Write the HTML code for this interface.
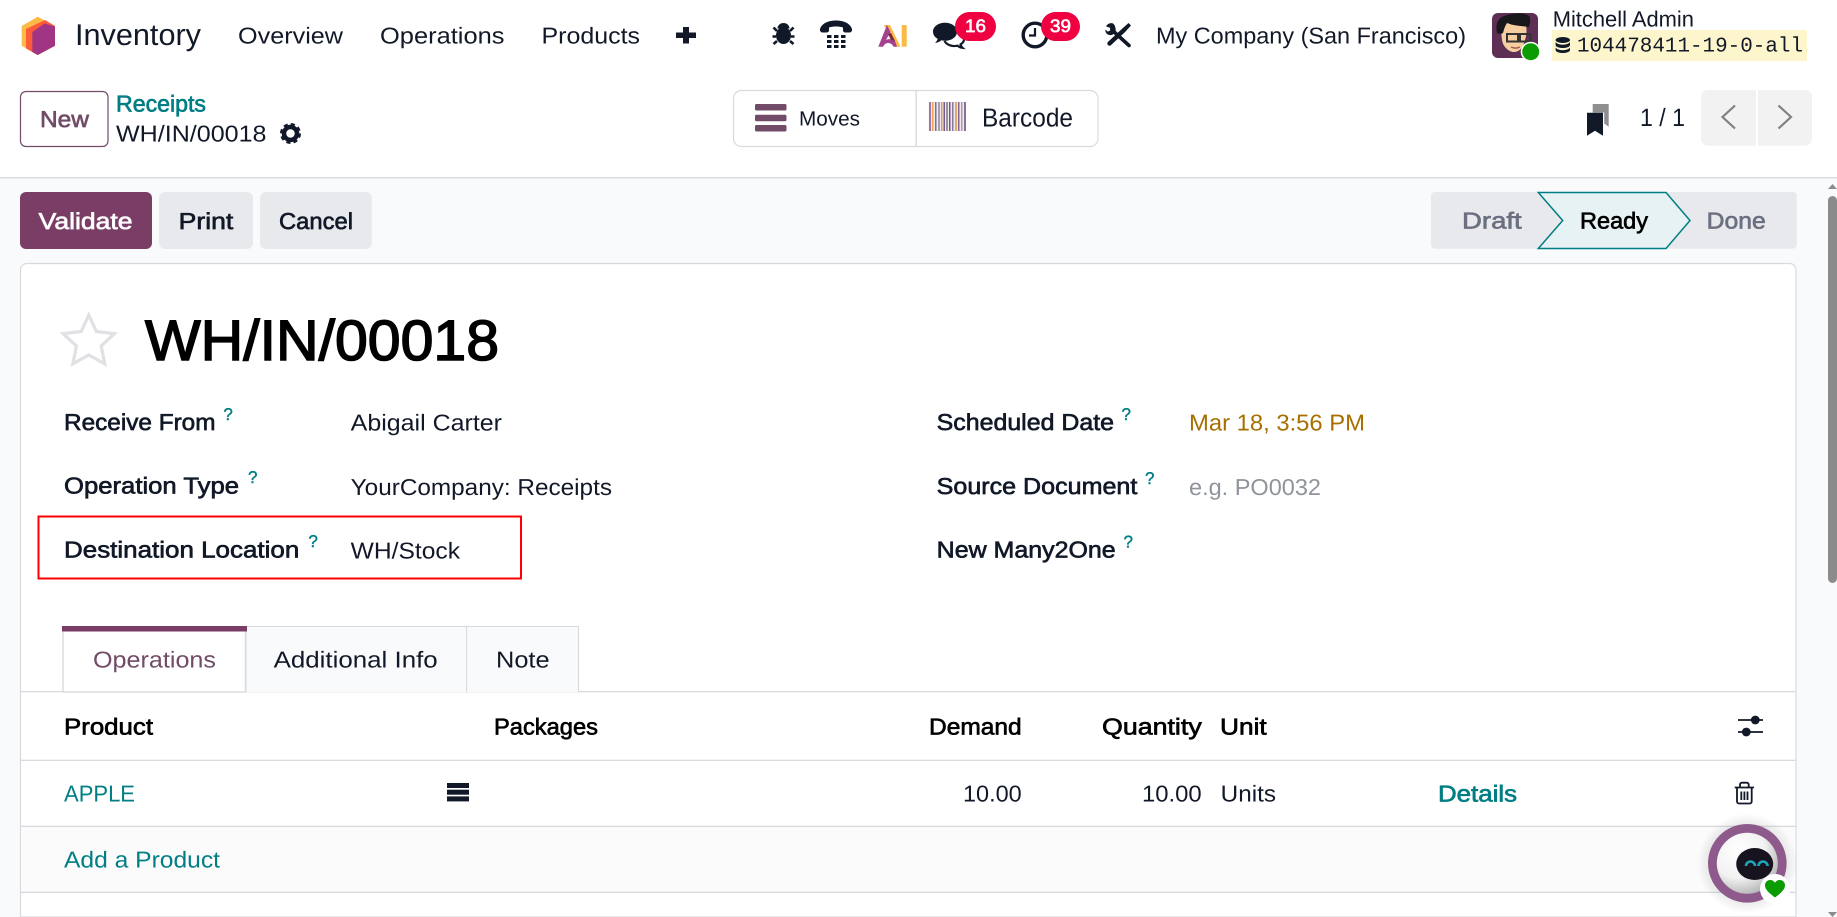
<!DOCTYPE html>
<html lang="en"><head><meta charset="utf-8"><title>WH/IN/00018</title>
<style>
html,body{margin:0;padding:0;width:1837px;height:917px;overflow:hidden;background:#f9fafb}
svg{display:block}
text{font-family:"Liberation Sans",sans-serif;font-size:23px;color:#111827;fill:currentColor;stroke:currentColor;stroke-width:0;text-rendering:geometricPrecision}
.b{stroke-width:.65px}
.t{color:#017e84}
.k{color:#000}
.q{font-size:17px;stroke-width:.4px;color:#017e84}
</style></head><body>
<svg width="1837" height="917" viewBox="0 0 1837 917" xmlns="http://www.w3.org/2000/svg">
<defs>
<radialGradient id="bh" cx="35%" cy="30%" r="80%"><stop offset="0" stop-color="#fff"/><stop offset=".55" stop-color="#f2f2f2"/><stop offset="1" stop-color="#aaa"/></radialGradient>
<radialGradient id="sh" cx="50%" cy="50%" r="50%"><stop offset=".72" stop-color="#000" stop-opacity=".1"/><stop offset="1" stop-color="#000" stop-opacity="0"/></radialGradient>
</defs>
<!-- backgrounds -->
<rect width="1837" height="917" fill="#f9fafb"/>
<rect width="1837" height="177" fill="#fff"/>
<rect y="177" width="1837" height="1.4" fill="#d8dadd"/>

<!-- logo -->
<polygon points="37.7,16.7 55,26 55,45.7 37.7,55 21.7,45.7 21.700,26" fill="#fbb945"/>
<polygon points="45,20 55,26 55,45.7 37.7,55 26,48.5 26,29" fill="#fc5c3a"/>
<polygon points="44.5,23.5 55,26.5 55,45.7 37.7,55 32.3,52 32.3,32" fill="#a23484"/>
<text x="75" y="45" style="font-size:30px" textLength="126" lengthAdjust="spacingAndGlyphs">Inventory</text>
<text x="238" y="43.5" textLength="105" lengthAdjust="spacingAndGlyphs">Overview</text>
<text x="380" y="43.5" textLength="124.5" lengthAdjust="spacingAndGlyphs">Operations</text>
<text x="541.5" y="43.5" textLength="98.5" lengthAdjust="spacingAndGlyphs">Products</text>
<path d="M683 27h6v5.500h7v5.500h-7V43.500h-6V38h-7v-5.500h7z" fill="#111827"/>

<!-- bug -->
<g fill="#111827" stroke="#111827">
<ellipse cx="783.5" cy="35.500" rx="7.500" ry="8.500" stroke="none"/>
<path d="M777.5 28.500a6 5.500 0 0 1 12 0z" stroke="none"/>
<path d="M777 31l-3.500-3.500M790 31l3.500-3.500M776 36.500h-3.500M791 36.500h3.500M777 41l-3.500 3M790 41l3.500 3" stroke-width="2.600" fill="none"/>
</g>
<!-- phone -->
<path d="M820 29c2-6 9-8.500 16-8.500s14 2.500 16 8.500c.3 2-.8 3.500-2.500 3.500h-4c-1.700 0-2.500-1-2.500-2.500v-2.500c-4.500-1.300-9.500-1.300-14 0V30c0 1.500-.8 2.500-2.500 2.500h-4C820.800 32.500 819.700 31 820 29z" fill="#111827"/>
<g fill="#111827">
<rect x="827" y="35" width="4.500" height="3"/><rect x="834" y="35" width="4.500" height="3"/><rect x="841" y="35" width="4.500" height="3"/>
<rect x="827" y="40" width="4.500" height="3"/><rect x="834" y="40" width="4.500" height="3"/><rect x="841" y="40" width="4.500" height="3"/>
<rect x="827" y="45" width="4.500" height="3"/><rect x="834" y="45" width="4.500" height="3"/><rect x="841" y="45" width="4.500" height="3"/>
</g>
<!-- AI -->
<path d="M884 25h6l10.500 21.700h-5.500z" fill="#fbb945"/>
<path d="M878.300 46.700L887 25l3.500 7-4.500 8c3-1.500 6.500-1 9 1l2 5.700h-3.500c-1.500-4-7-5-9.500-1.500l-1 1.500z" fill="#a6418f"/>
<path d="M888 34l3-1 4 8-4-1z" fill="#7a2a3a"/>
<rect x="901.700" y="25" width="5" height="21.700" rx="1" fill="#fbb945"/>
<!-- chat -->
<path d="M945 22.700c-6.800 0-12 3.900-12 9 0 3 1.900 5.500 4.700 7.100-.4 1.700-1.400 3-2.600 4.200 2.500-.3 4.700-1.300 6.300-2.700 1.200.3 2.400.4 3.600.4 6.800 0 12-3.900 12-9s-5.200-9-12-9z" fill="#111827"/>
<path d="M958.500 33c3.600 1.300 5.500 3.500 5.500 6.300 0 2.300-1.500 4-3.500 5.200.3 1.300 1 2.400 2 3.300-2-.2-3.800-1-5-2.100-5.500 1.200-11-1-13-4.700" fill="none" stroke="#111827" stroke-width="2.200"/>
<rect x="955" y="12" width="41" height="29" rx="14.500" fill="#ef0041"/>
<text x="965" y="32" class="b" style="font-size:18px;color:#fff" textLength="21" lengthAdjust="spacingAndGlyphs">16</text>
<!-- clock -->
<circle cx="1035" cy="35" r="11.800" fill="none" stroke="#111827" stroke-width="3.400"/>
<path d="M1035 28v7.500h-6" fill="none" stroke="#111827" stroke-width="2.200"/>
<rect x="1041" y="12" width="39" height="29" rx="14.500" fill="#ef0041"/>
<text x="1050" y="32" class="b" style="font-size:18px;color:#fff" textLength="21" lengthAdjust="spacingAndGlyphs">39</text>
<!-- tools -->
<path d="M1112 30l17 15.500" stroke="#111827" stroke-width="3.600" fill="none" stroke-linecap="round"/>
<path d="M1112.500 23.200c-3-.5-5.500 1-6.300 3.300l3.800 1.300.4 2.600-2.600 1.200-2.400-2c-.4 3 1.900 5.700 5.300 5.500 3.200-.2 5.300-2.900 5-5.700-.2-3-1.400-5.400-3.200-6.200z" fill="#111827"/>
<path d="M1124 30l-14.500 13.500" stroke="#111827" stroke-width="4.400" fill="none" stroke-linecap="round"/>
<path d="M1122.500 28.500l6-5.500 2.500 2.500-5.500 6z" fill="#111827"/>
<text x="1156" y="43.500" textLength="310" lengthAdjust="spacingAndGlyphs">My Company (San Francisco)</text>

<!-- avatar -->
<rect x="1492" y="13" width="46" height="45" rx="6" fill="#5e2f55"/>
<path d="M1502 40c-1-7-1-13 2-17h21c2 4 2 11 0 17-2 8-6 12-11 12s-11-5-12-12z" fill="#f6cfa0"/>
<path d="M1497 33c-2-8 1-15 7-17 8-3 20-4 25 0 2 2 1 7 0 11-6-1-15-1-22-4-2 3-3 6-4 10-2 1-4 1-6 0z" fill="#17171c"/>
<rect x="1507" y="34" width="11" height="7.500" fill="none" stroke="#333" stroke-width="2"/>
<rect x="1520" y="34" width="10.500" height="7.500" fill="none" stroke="#333" stroke-width="2"/>
<path d="M1511 47c3 1.500 6 1.500 9 0" stroke="#a65a45" stroke-width="1.500" fill="none"/>
<circle cx="1530.700" cy="51.700" r="10" fill="#fff"/>
<circle cx="1530.700" cy="51.700" r="8.500" fill="#0a9c00"/>
<text x="1552.700" y="26.700" style="font-size:22px" textLength="141.300" lengthAdjust="spacingAndGlyphs">Mitchell Admin</text>
<rect x="1552" y="30" width="255" height="31" fill="#fdf6cc"/>
<g fill="#111827">
<ellipse cx="1562.800" cy="40" rx="7.200" ry="3"/>
<path d="M1555.600 42c1 1.700 4 2.700 7.200 2.700s6.200-1 7.200-2.700v3c0 1.700-3.200 3-7.200 3s-7.200-1.300-7.200-3z"/>
<path d="M1555.600 47.500c1 1.700 4 2.700 7.200 2.700s6.200-1 7.200-2.700v2.500c0 1.700-3.200 3-7.200 3s-7.200-1.300-7.200-3z"/>
</g>
<text x="1577" y="51.700" style="font-family:'Liberation Mono',monospace;font-size:21px" textLength="226" lengthAdjust="spacingAndGlyphs">104478411-19-0-all</text>

<!-- control panel -->
<rect x="20.500" y="91.500" width="87.500" height="55" rx="5.500" fill="#fff" stroke="#714b67" stroke-width="1.200"/>
<text x="40" y="127" class="b" style="color:#714b67" textLength="49" lengthAdjust="spacingAndGlyphs">New</text>
<text x="116" y="111.700" class="b t" textLength="90" lengthAdjust="spacingAndGlyphs">Receipts</text>
<text x="116" y="141.700" textLength="150.500" lengthAdjust="spacingAndGlyphs">WH/IN/00018</text>
<circle cx="290.500" cy="133.500" r="6.500" fill="none" stroke="#111827" stroke-width="4.500"/>
<circle cx="290.500" cy="133.500" r="9" fill="none" stroke="#111827" stroke-width="3" stroke-dasharray="4 3.070"/>

<rect x="733.500" y="90.500" width="364.500" height="56" rx="8" fill="#fff" stroke="#d8dadd" stroke-width="1.200"/>
<rect x="915.500" y="91" width="1.400" height="55" fill="#d8dadd"/>
<g fill="#714b67">
<rect x="755" y="104" width="31.500" height="6.500" rx="1.500"/>
<rect x="755" y="114.800" width="31.500" height="6.500" rx="1.500"/>
<rect x="755" y="125" width="31.500" height="6.500" rx="1.500"/>
</g>
<text x="799" y="125.700" style="font-size:20.500px" textLength="61" lengthAdjust="spacingAndGlyphs">Moves</text>
<g>
<rect x="928.600" y="102" width="37.400" height="29" fill="#efe9ea"/>
<rect x="929" y="102" width="2" height="29" fill="#9a7ba8"/><rect x="932" y="102" width="1.500" height="29" fill="#e7a65a"/>
<rect x="935" y="102" width="1.500" height="29" fill="#8a6b92"/><rect x="938" y="102" width="2" height="29" fill="#a9a2a8"/>
<rect x="941" y="102" width="1.500" height="29" fill="#d5a06d"/><rect x="943.500" y="102" width="1.500" height="29" fill="#70608a"/>
<rect x="946" y="102" width="2" height="29" fill="#9f8fa9"/><rect x="949" y="102" width="1.500" height="29" fill="#6e5c83"/>
<rect x="952" y="102" width="1.500" height="29" fill="#8a7a9e"/><rect x="955" y="102" width="2" height="29" fill="#e4aa6c"/>
<rect x="958" y="102" width="1.500" height="29" fill="#7f6b93"/><rect x="961" y="102" width="1.500" height="29" fill="#a79bb2"/>
<rect x="964" y="102" width="2" height="29" fill="#8d6ea3"/>
</g>
<text x="982" y="126.700" style="font-size:26px" textLength="91" lengthAdjust="spacingAndGlyphs">Barcode</text>

<path d="M1592.700 104h16v22.700l-4.500-3.200v-11h-11.500z" fill="#8f8f8f"/>
<path d="M1587 112.700h16v23l-8-5-8 5z" fill="#111827"/>
<text x="1640" y="126" style="font-size:25px" textLength="45" lengthAdjust="spacingAndGlyphs">1 / 1</text>
<rect x="1701" y="90" width="111" height="55.700" rx="7" fill="#f2f2f3"/>
<rect x="1756" y="90" width="2" height="55.700" fill="#fff"/>
<path d="M1735 105.500l-12.500 11.500 12.500 11.500" fill="none" stroke="#808080" stroke-width="2.200"/>
<path d="M1778.500 105.500l12.500 11.500-12.500 11.500" fill="none" stroke="#808080" stroke-width="2.200"/>

<!-- action buttons -->
<rect x="20" y="192" width="132" height="57" rx="6" fill="#7a3e66"/>
<text x="38.700" y="229" class="b" style="color:#fff" textLength="93.800" lengthAdjust="spacingAndGlyphs">Validate</text>
<rect x="159" y="192" width="94" height="57" rx="6" fill="#e8e9ed"/>
<text x="178.700" y="229" class="b" textLength="54.600" lengthAdjust="spacingAndGlyphs">Print</text>
<rect x="260" y="192" width="111.700" height="57" rx="6" fill="#e8e9ed"/>
<text x="279" y="229" class="b" textLength="74" lengthAdjust="spacingAndGlyphs">Cancel</text>

<!-- statusbar -->
<rect x="1431" y="192" width="365.700" height="56.700" rx="4" fill="#e8e9ed"/>
<polygon points="1538.300,192.500 1666,192.500 1690,220.500 1666,248.500 1538.300,248.500 1562.700,220.500" fill="#e6f2f3" stroke="#017e84" stroke-width="1.500"/>
<text x="1462" y="228.300" class="b" style="color:#6b7080" textLength="59.700" lengthAdjust="spacingAndGlyphs">Draft</text>
<text x="1580" y="228.300" class="b k" textLength="68" lengthAdjust="spacingAndGlyphs">Ready</text>
<text x="1706.700" y="228.300" class="b" style="color:#6b7080" textLength="59" lengthAdjust="spacingAndGlyphs">Done</text>

<!-- sheet -->
<path d="M20.500 917V270a6.500 6.500 0 0 1 6.500-6.500h1762.500a6.500 6.500 0 0 1 6.500 6.500V917z" fill="#fff" stroke="#d8dadd" stroke-width="1.200"/>
<polygon points="88.800,315 96.400,331.500 114.500,333.700 101.200,346 104.700,363.800 88.800,355 72.900,363.800 76.400,346 63.100,333.700 81.200,331.500" fill="none" stroke="#dfe1e5" stroke-width="3.200"/>
<text x="145" y="360" class="k" style="font-size:57px;stroke-width:1.500px" textLength="354" lengthAdjust="spacingAndGlyphs">WH/IN/00018</text>

<text x="64" y="430" class="b" textLength="151.500" lengthAdjust="spacingAndGlyphs">Receive From</text>
<text x="223.400" y="420" class="q">?</text>
<text x="350.700" y="430.700" textLength="151.300" lengthAdjust="spacingAndGlyphs">Abigail Carter</text>
<text x="64" y="493.300" class="b" textLength="175" lengthAdjust="spacingAndGlyphs">Operation Type</text>
<text x="248" y="483" class="q">?</text>
<text x="350.700" y="495" textLength="261.300" lengthAdjust="spacingAndGlyphs">YourCompany: Receipts</text>
<rect x="38.500" y="516.500" width="482.500" height="62" fill="none" stroke="#ff0000" stroke-width="2"/>
<text x="64" y="557.700" class="b" textLength="235.300" lengthAdjust="spacingAndGlyphs">Destination Location</text>
<text x="308.400" y="547" class="q">?</text>
<text x="350.700" y="558.300" textLength="109.300" lengthAdjust="spacingAndGlyphs">WH/Stock</text>

<text x="936.700" y="430" class="b" textLength="177.300" lengthAdjust="spacingAndGlyphs">Scheduled Date</text>
<text x="1121.500" y="420" class="q">?</text>
<text x="1189" y="430.700" style="color:#a66f00" textLength="176" lengthAdjust="spacingAndGlyphs">Mar 18, 3:56 PM</text>
<text x="936.700" y="494" class="b" textLength="200.600" lengthAdjust="spacingAndGlyphs">Source Document</text>
<text x="1145" y="484" class="q">?</text>
<text x="1189" y="495" style="color:#8f949c" textLength="132" lengthAdjust="spacingAndGlyphs">e.g. PO0032</text>
<text x="936.700" y="557.700" class="b" textLength="179" lengthAdjust="spacingAndGlyphs">New Many2One</text>
<text x="1123.500" y="547.700" class="q">?</text>

<!-- tabs -->
<rect x="246" y="626.500" width="220.600" height="65" fill="#f9fafb" stroke="#d8dadd" stroke-width="1.200"/>
<rect x="466.600" y="626.500" width="111.900" height="65" fill="#f9fafb" stroke="#d8dadd" stroke-width="1.200"/>
<rect x="20.500" y="691" width="1775.500" height="1.300" fill="#d8dadd"/>
<rect x="246.700" y="627" width="219.300" height="65" fill="#f9fafb"/>
<rect x="467.200" y="627" width="110.700" height="65" fill="#f9fafb"/>
<rect x="63" y="630" width="182.500" height="62" fill="#fff" stroke="#d8dadd" stroke-width="1.400"/>
<rect x="62" y="626" width="185" height="5.500" fill="#7a3e66"/>
<text x="93" y="667.700" style="color:#714b67" textLength="123" lengthAdjust="spacingAndGlyphs">Operations</text>
<text x="273.600" y="667.700" textLength="164.100" lengthAdjust="spacingAndGlyphs">Additional Info</text>
<text x="496" y="667.700" textLength="53.600" lengthAdjust="spacingAndGlyphs">Note</text>

<!-- table -->
<rect x="21" y="827" width="1774.500" height="65" fill="#fbfbfc"/>
<rect x="21" y="759.700" width="1774.500" height="1.300" fill="#d8dadd"/>
<rect x="21" y="825.700" width="1774.500" height="1.300" fill="#d8dadd"/>
<rect x="21" y="891.700" width="1774.500" height="1.300" fill="#d8dadd"/>
<text x="64" y="734.300" class="b k" textLength="89" lengthAdjust="spacingAndGlyphs">Product</text>
<text x="494" y="734.300" class="b k" textLength="104" lengthAdjust="spacingAndGlyphs">Packages</text>
<text x="929" y="734.300" class="b k" textLength="92.700" lengthAdjust="spacingAndGlyphs">Demand</text>
<text x="1102" y="734.300" class="b k" textLength="99.700" lengthAdjust="spacingAndGlyphs">Quantity</text>
<text x="1220" y="734.300" class="b k" textLength="46.700" lengthAdjust="spacingAndGlyphs">Unit</text>
<path d="M1738 720h25M1738 732h25" stroke="#111827" stroke-width="1.800"/>
<circle cx="1755.300" cy="720" r="4.400" fill="#111827"/><circle cx="1746.300" cy="732" r="4.400" fill="#111827"/>

<text x="64" y="801.500" class="t" textLength="71" lengthAdjust="spacingAndGlyphs">APPLE</text>
<g fill="#111827"><rect x="447" y="783" width="22" height="5"/><rect x="447" y="789.700" width="22" height="5"/><rect x="447" y="796.400" width="22" height="5"/></g>
<text x="963" y="801.700" textLength="58.700" lengthAdjust="spacingAndGlyphs">10.00</text>
<text x="1142" y="801.700" textLength="59.700" lengthAdjust="spacingAndGlyphs">10.00</text>
<text x="1220.700" y="801.700" textLength="55.300" lengthAdjust="spacingAndGlyphs">Units</text>
<text x="1438" y="801.500" class="b t" textLength="79" lengthAdjust="spacingAndGlyphs">Details</text>
<g fill="none" stroke="#111827" stroke-width="1.800">
<path d="M1734.700 787.500h19.300"/>
<path d="M1740 787v-2.500a1.800 1.800 0 0 1 1.800-1.800h5.100a1.800 1.800 0 0 1 1.800 1.800v2.500"/>
<path d="M1737 787.500v14a2 2 0 0 0 2 2h10.700a2 2 0 0 0 2-2v-14"/>
<path d="M1741.300 791.500v8.500M1744.400 791.500v8.500M1747.500 791.500v8.500"/>
</g>
<text x="64" y="867.300" class="t" textLength="156" lengthAdjust="spacingAndGlyphs">Add a Product</text>

<!-- bot -->
<circle cx="1747.300" cy="863.300" r="50" fill="url(#sh)"/>
<circle cx="1747.300" cy="863.300" r="39.300" fill="#8e5a8c"/>
<circle cx="1747.300" cy="863.300" r="30.500" fill="url(#bh)"/>
<ellipse cx="1754.700" cy="864" rx="18.500" ry="16" fill="#17131f"/>
<path d="M1746 866a4.500 4.500 0 0 1 9 0M1758.500 866a4.500 4.500 0 0 1 9 0" fill="none" stroke="#1ea3b8" stroke-width="2.600"/>
<circle cx="1775" cy="889" r="15" fill="#fff"/>
<path d="M1775 897.500c-6-4.500-10-8-10-12.300 0-3 2.400-5.200 5.200-5.200 2 0 3.800 1 4.800 2.800 1-1.800 2.800-2.800 4.800-2.800 2.800 0 5.200 2.200 5.200 5.200 0 4.300-4 7.800-10 12.300z" fill="#0a9c00"/>

<!-- scrollbar -->
<polygon points="1828,189 1837,189 1832.500,184" fill="#8b8b8b"/>
<rect x="1828" y="196" width="9" height="387" rx="4.500" fill="#8b8b8b"/>
<polygon points="1828,912 1837,912 1832.500,917" fill="#8b8b8b"/>
</svg>
</body></html>
